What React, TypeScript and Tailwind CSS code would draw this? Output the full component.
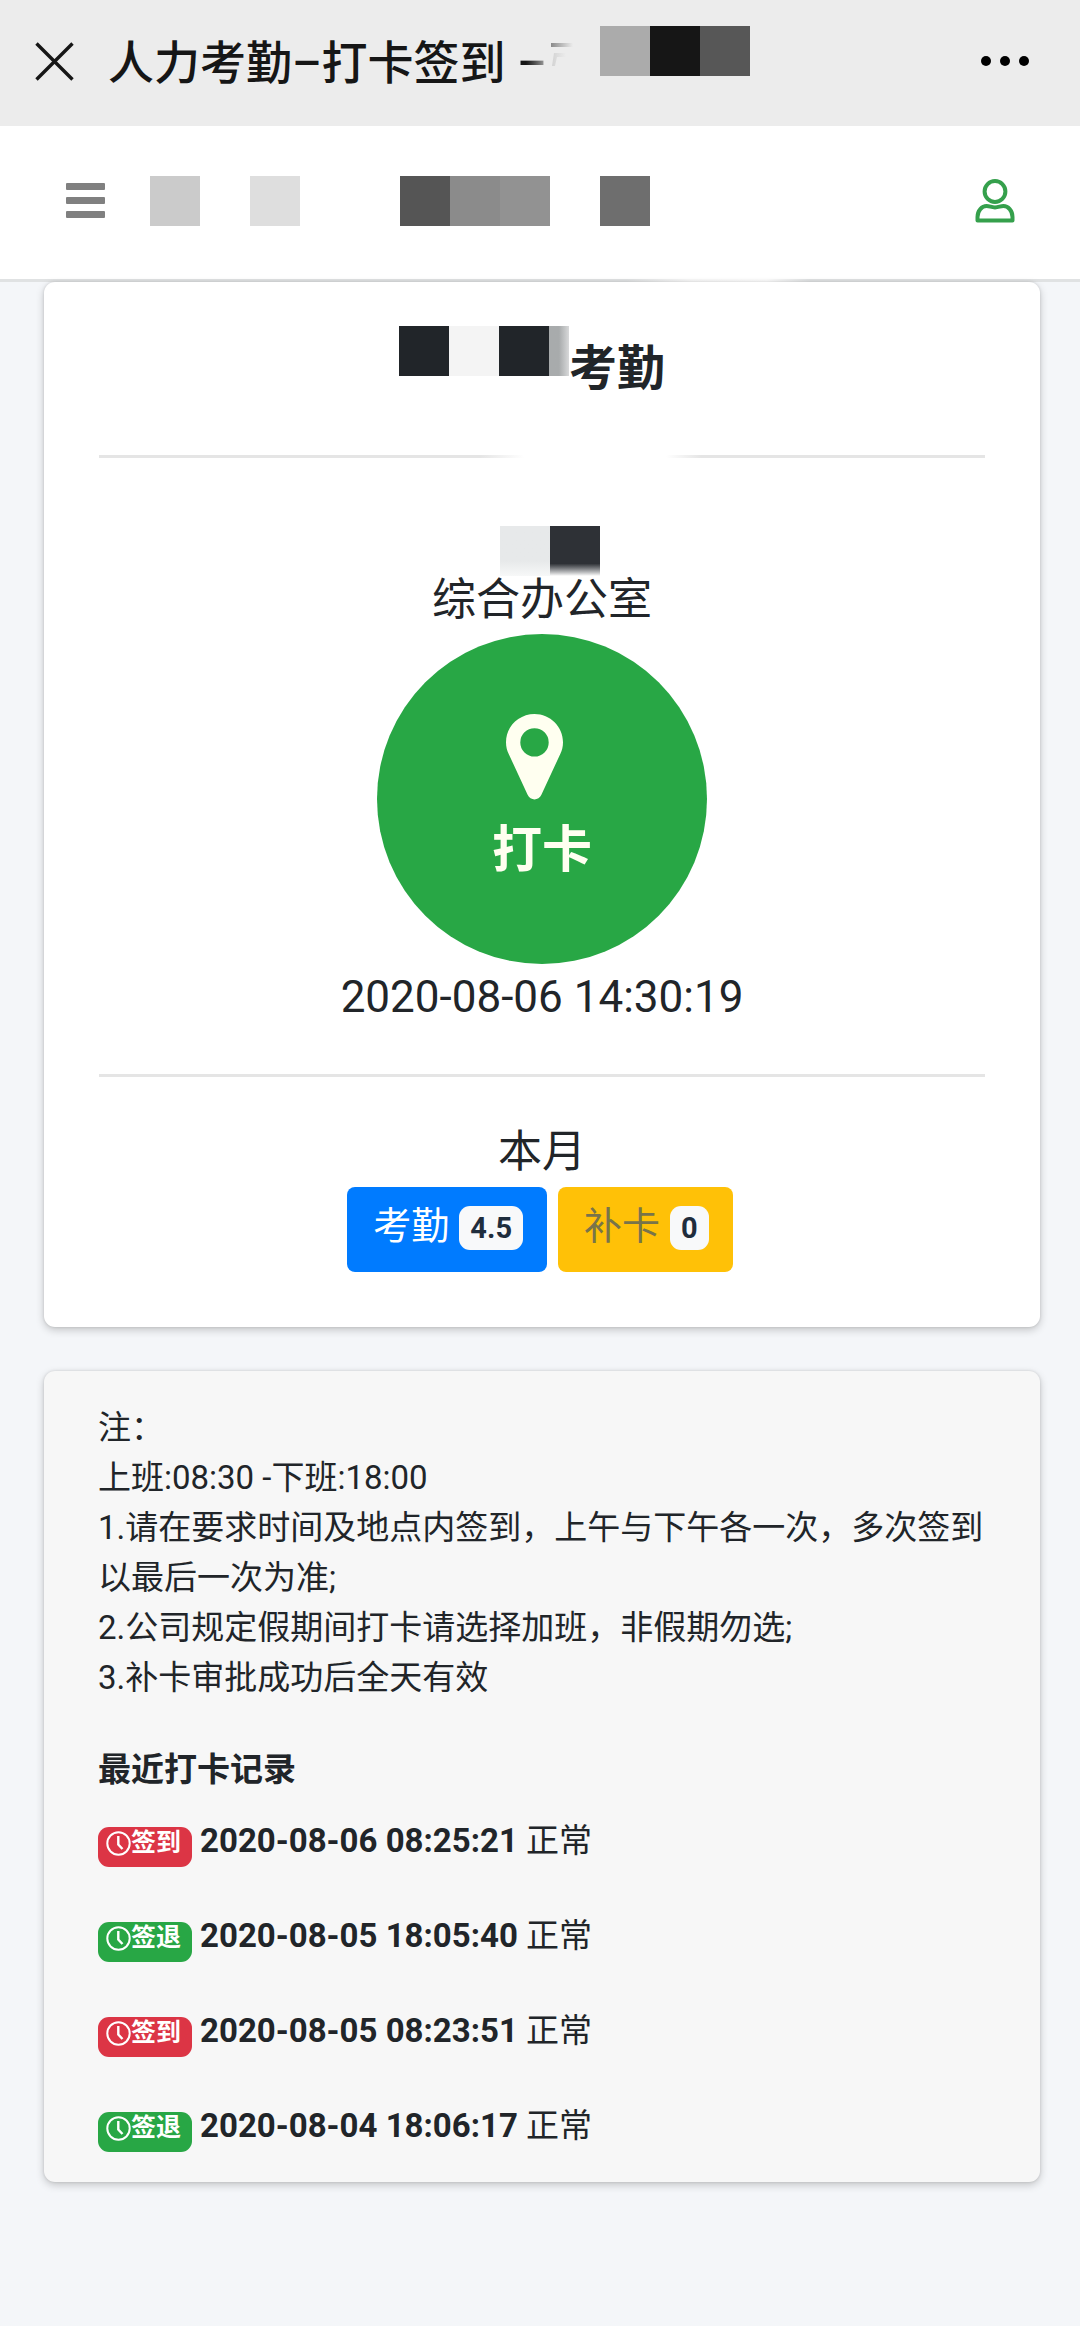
import { useState } from "react";
import clsx from "clsx";

const records = [
  { type: "签到", time: "2020-08-06 08:25:21", status: "正常" },
  { type: "签退", time: "2020-08-05 18:05:40", status: "正常" },
  { type: "签到", time: "2020-08-05 08:23:51", status: "正常" },
  { type: "签退", time: "2020-08-04 18:06:17", status: "正常" },
];

// A row of 50px tiles standing in for a hidden name
function Mosaic({ tiles, className }: { tiles: string[]; className?: string }) {
  return (
    <span className={clsx("flex shrink-0", className)} aria-hidden="true">
      {tiles.map((tile, i) => (
        <span key={i} className={clsx("h-[50px] w-[50px]", tile)} />
      ))}
    </span>
  );
}

function PinIcon() {
  return (
    <svg width="57" height="86" viewBox="0 0 57 86" fill="#fffff0">
      <path
        fillRule="evenodd"
        d="M28.5 0C12.8 0 0 12.6 0 28.2c0 4.4 1 8.2 2.600 11.500L21.600 80.800c2.800 6.200 11 6.200 13.800 0L54.400 39.700C56 36.400 57 32.600 57 28.200 57 12.600 44.200 0 28.500 0Zm0 14.200a14.200 14.200 0 1 1 0 28.400 14.200 14.200 0 0 1 0-28.400Z"
      />
    </svg>
  );
}

function ClockIcon() {
  return (
    <svg width="25" height="25" viewBox="0 0 25 25" fill="none" stroke="currentColor">
      <circle cx="12.500" cy="12.500" r="11.200" strokeWidth="2" />
      <path d="M12.300 5v8.500l4.200 4.500" strokeWidth="2.400" />
    </svg>
  );
}

function TitleBar() {
  return (
    <header className="flex h-[126px] items-center bg-[#ececec] pr-[50px] pb-1 pl-[35px]">
      <button type="button" aria-label="关闭">
        <svg width="39" height="39" viewBox="0 0 39 39" stroke="#161616" strokeWidth="3.400">
          <path d="M1.500 1.500l36 36M37.500 1.500l-36 36" />
        </svg>
      </button>
      <h1 className="ml-[34px] pt-1 text-[46px] leading-[60px] font-medium whitespace-nowrap text-[#161616]">
        人力考勤–打卡签到{" "}
        <span className="bg-linear-to-r from-[#161616] from-30% to-[#b0b0b0] bg-clip-text text-transparent">
          –
        </span>
      </h1>
      <svg className="ml-1 shrink-0" width="24" height="38" viewBox="0 0 24 38">
        <defs>
          <linearGradient id="fade">
            <stop offset="0" stopColor="#8a8a8a" />
            <stop offset="1" stopColor="#ececec" />
          </linearGradient>
        </defs>
        <rect y="1" width="22" height="4" fill="url(#fade)" />
        <path d="M3 11h12v4H6l-2 9H1Z" fill="url(#fade)" opacity="0.250" />
      </svg>
      <Mosaic
        className="mb-5 ml-[25px]"
        tiles={["bg-[#ababab]", "bg-[#161616]", "bg-[#575757]"]}
      />
      <button type="button" aria-label="更多" className="ml-auto">
        <svg width="50" height="12" viewBox="0 0 50 12">
          <circle cx="6" cy="6" r="5" />
          <circle cx="25" cy="6" r="5" />
          <circle cx="44" cy="6" r="5" />
        </svg>
      </button>
    </header>
  );
}

function NavBar() {
  return (
    <>
      <nav className="flex h-[153px] items-center bg-white pr-[65px] pb-1 pl-[66px]">
        <button type="button" aria-label="菜单">
          <svg width="39" height="35" viewBox="0 0 39 35" fill="#808080">
            <rect width="39" height="7" rx="1" />
            <rect y="14" width="39" height="7" rx="1" />
            <rect y="28" width="39" height="7" rx="1" />
          </svg>
        </button>
        <Mosaic
          className="ml-[45px]"
          tiles={[
            "bg-[#cbcbcb]",
            "",
            "bg-[#dedede]",
            "",
            "",
            "bg-[#555555]",
            "bg-[#8b8b8b]",
            "bg-[#929292]",
            "",
            "bg-[#6e6e6e]",
          ]}
        />
        <a href="#user" aria-label="用户" className="ml-auto">
          <svg
            width="40"
            height="44"
            viewBox="0 0 40 44"
            fill="none"
            stroke="#35a04c"
            strokeWidth="4"
            strokeLinejoin="round"
          >
            <circle cx="20" cy="12.500" r="10.400" />
            <path d="M2.500 41.500V38c0-6.500 4.500-11 9-11 3.500 0 4.500 1.400 8.500 1.400s5-1.400 8.500-1.400c4.500 0 9 4.500 9 11v3.500Z" />
          </svg>
        </a>
      </nav>
      <div className="h-[3px] bg-[linear-gradient(to_right,#e0e2e3_58%,#f9f9f9_64%,#fdfdfd_71%,#e0e2e3_75%)]" />
    </>
  );
}

function CheckInCard() {
  const [count] = useState({ attendance: "4.5", makeup: "0" });

  return (
    <section className="rounded-[11px] bg-white px-[55px] pb-[55px] shadow-[0_0_3px_rgba(0,0,0,0.13),0_3px_8px_rgba(0,0,0,0.2)]">
      <div className="flex h-[173px] items-center justify-center pr-5">
        <Mosaic
          className="mb-9"
          tiles={["bg-[#212529]", "bg-[#f4f4f4]", "bg-[#212529]"]}
        />
        <span className="mb-9 h-[50px] w-5 bg-linear-to-r from-[#a8abac] from-50% to-[#d8d9da]" />
        <h2 className="text-[48px] leading-[60px] font-bold">考勤</h2>
      </div>
      <div className="h-[3px] bg-[linear-gradient(to_right,#e5e5e5_43%,#ffffff_48%,#ffffff_64%,#e5e5e5_68%)]" />

      <div className="mt-[68px] flex flex-col items-center text-[44px]">
        <span className="flex pl-4" aria-hidden="true">
          <span className="h-[50px] w-[50px] bg-linear-to-b from-[#e7e9ea] from-70% to-[#f7f8f8]" />
          <span className="h-[50px] w-[50px] bg-linear-to-b from-[#2e3136] from-75% to-white" />
        </span>
        <p className="mb-[10px] leading-[48px]">综合办公室</p>
        <button
          type="button"
          className="flex h-[330px] w-[330px] flex-col items-center justify-center rounded-full bg-[#28a745] pb-1 text-[50px] leading-[60px] font-bold text-[#fffff0]"
        >
          <span className="mb-5 pr-4">
            <PinIcon />
          </span>
          打卡
        </button>
        <time className="leading-[66px]">2020-08-06 14:30:19</time>
      </div>

      <hr className="my-[44px] border-t-[3px] border-[#e5e5e5]" />

      <p className="mb-1 text-center text-[44px] leading-[62px]">本月</p>
      <div className="flex justify-center gap-[11px] pr-1 text-[38px] leading-[50px]">
        <button
          type="button"
          className="flex h-[85px] items-center rounded-lg bg-[#007bff] pr-[24px] pb-2 pl-[26px] text-white"
        >
          考勤
          <span className="mt-1 ml-[10px] rounded-[11px] bg-[#f8f9fa] px-[11px] text-[29px] leading-[44px] font-bold text-[#1f2d3d]">
            {count.attendance}
          </span>
        </button>
        <button
          type="button"
          className="flex h-[85px] items-center rounded-lg bg-[#ffc107] pr-[24px] pb-2 pl-[26px] text-[#78744a]"
        >
          补卡
          <span className="mt-1 ml-[10px] rounded-[11px] bg-[#f8f9fa] px-[11px] text-[29px] leading-[44px] font-bold text-[#1f2d3d]">
            {count.makeup}
          </span>
        </button>
      </div>
    </section>
  );
}

function RecordCard() {
  return (
    <section className="mt-[44px] rounded-[11px] bg-[#f7f7f7] pt-[32px] pr-[55px] pb-[30px] pl-[54px] text-[33px] leading-[50px] shadow-[0_0_3px_rgba(0,0,0,0.13),0_3px_8px_rgba(0,0,0,0.2)]">
      <p>注：</p>
      <p>上班:08:30 -下班:18:00</p>
      <p>1.请在要求时间及地点内签到，上午与下午各一次，多次签到以最后一次为准;</p>
      <p>2.公司规定假期间打卡请选择加班，非假期勿选;</p>
      <p>3.补卡审批成功后全天有效</p>

      <h3 className="mt-[42px] font-bold">最近打卡记录</h3>
      <ul className="mt-[20px] flex flex-col gap-[43px]">
        {records.map((record) => (
          <li key={record.time} className="flex items-center">
            <span
              className={clsx(
                "mt-3 mr-2 flex h-10 items-center rounded-[11px] pr-[11px] pb-2 pl-2 text-[25px] leading-8 font-bold text-white",
                record.type === "签到" ? "bg-[#dc3545]" : "bg-[#28a745]",
              )}
            >
              <ClockIcon />
              {record.type}
            </span>
            <time className="mr-2 font-bold">{record.time}</time>
            {record.status}
          </li>
        ))}
      </ul>
    </section>
  );
}

export default function App() {
  return (
    <div className="min-h-screen bg-[#f4f6f9] font-['Roboto','Noto_Sans_CJK_SC',sans-serif] text-[#212529]">
      <TitleBar />
      <NavBar />
      <main className="pr-[40px] pb-[44px] pl-[44px]">
        <CheckInCard />
        <RecordCard />
      </main>
    </div>
  );
}
